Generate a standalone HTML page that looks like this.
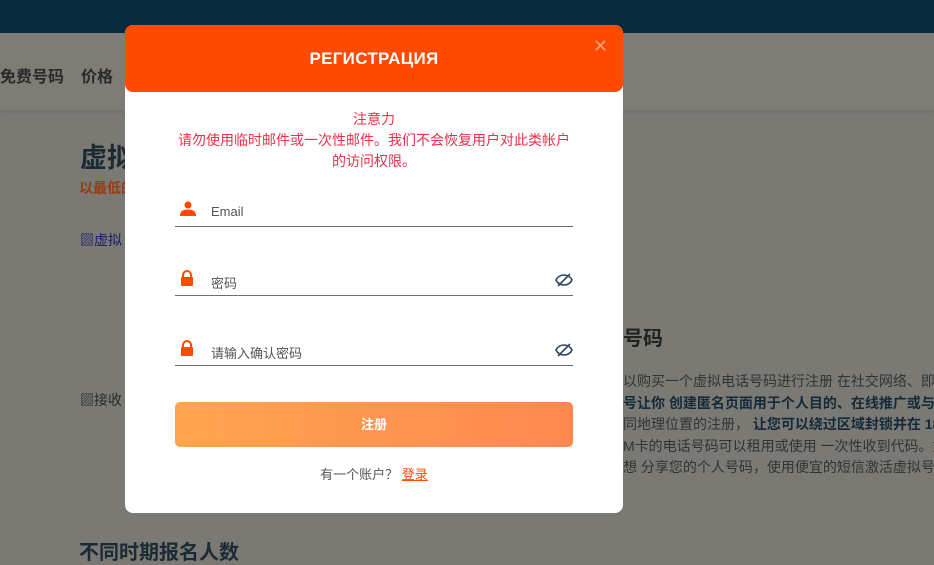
<!DOCTYPE html>
<html><head><meta charset="utf-8"><style>
*{margin:0;padding:0;box-sizing:border-box}
body{width:934px;height:558px;overflow:hidden;background:#7a7974;font-family:"Liberation Sans","Noto Sans CJK SC",sans-serif;position:relative}
.top{position:absolute;left:0;top:0;width:934px;height:33px;background:#0a2b3d}
.nav{position:absolute;left:0;top:33px;width:934px;height:77px;background:#7f7c76;box-shadow:0 2px 4px rgba(0,0,0,.08)}
.nav span{position:absolute;top:30px;font-size:16px;font-weight:bold;color:#2a2a2a}
.t{position:absolute;color:#1c2a36;font-weight:bold}
.modal{position:absolute;left:125px;top:25px;width:498px;height:488px;background:#fff;border-radius:8px;overflow:hidden}
.hd{height:67px;background:#ff4a00;border-radius:8px;color:#fff;font-weight:bold;font-size:17px;text-align:center;line-height:67px;letter-spacing:.3px}
.x{position:absolute;right:15px;top:11px;color:#f8a07a;font-size:18px;font-family:"DejaVu Sans",sans-serif}
.warn{position:absolute;left:0;width:498px;top:84px;text-align:center;color:#ee2f4a;font-size:14px;line-height:21px}
.f{position:absolute;left:50px;width:398px;border-bottom:1px solid #6e6d66;height:30px}
.f .ic{position:absolute;left:5px;top:4px}
.f .lb{position:absolute;left:36px;top:7px;font-size:13px;color:#555}
.f .eye{position:absolute;right:0;top:6px}
.btn{position:absolute;left:50px;top:377px;width:398px;height:45px;border-radius:5px;background:linear-gradient(90deg,#ffa44e,#ff8850);color:#fff;font-weight:bold;font-size:13px;text-align:center;line-height:45px}
.lg{position:absolute;top:439px;width:498px;text-align:center;font-size:13px;color:#555}
.lg a{color:#ff4a00;text-decoration:underline}
</style></head><body>
<div class="top"></div>
<div class="nav"><span style="left:0">免费号码</span><span style="left:81px">价格</span></div>
<div class="t" style="left:80px;top:136px;font-size:27px">虚拟</div>
<div class="t" style="left:79px;top:178px;font-size:14px;color:#9a3a10">以最低的</div>
<div style="position:absolute;left:80px;top:230px;font-size:14px;color:#1a1a6a">▨虚拟</div>
<div style="position:absolute;left:80px;top:390px;font-size:14px;color:#2a2a2a">▨接收</div>
<div class="t" style="left:79px;top:536px;font-size:20px">不同时期报名人数</div>
<div class="t" style="left:623px;top:322px;font-size:20px;color:#222">号码</div>
<div style="position:absolute;left:623px;top:371px;font-size:14px;line-height:21.5px;color:#333;white-space:nowrap">以购买一个虚拟电话号码进行注册 在社交网络、即<br><b style="color:#142a3a">号让你 创建匿名页面用于个人目的、在线推广或与</b><br>同地理位置的注册， <b style="color:#142a3a">让您可以绕过区域封锁并在 18</b><br>M卡的电话号码可以租用或使用 一次性收到代码。如<br>想 分享您的个人号码，使用便宜的短信激活虚拟号</div>
<div class="modal">
<div class="hd">РЕГИСТРАЦИЯ</div>
<div class="x">✕</div>
<div class="warn">注意力<br>请勿使用临时邮件或一次性邮件。我们不会恢复用户对此类帐户<br>的访问权限。</div>
<div class="f" style="top:172px"><svg class="ic" width="16" height="16" viewBox="0 0 16 16"><circle cx="8" cy="4" r="3.5" fill="#ff4a00"/><path d="M0 15c0-5 3-6.5 8-6.5s8 1.5 8 6.5z" fill="#ff4a00"/></svg><span class="lb">Email</span></div>
<div class="f" style="top:241px"><svg class="ic" width="14" height="16" viewBox="0 0 14 16"><path d="M3 7V5a4 4 0 0 1 8 0v2" stroke="#ff4a00" stroke-width="2" fill="none"/><rect x="1" y="7" width="12" height="9" rx="1" fill="#ff4a00"/></svg><span class="lb">密码</span><svg class="eye" width="18" height="16" viewBox="0 0 18 16"><path d="M1 8c2-4 5-5 8-5s6 1 8 5c-2 4-5 5-8 5s-6-1-8-5z" stroke="#2d4660" stroke-width="1.6" fill="none"/><path d="M3 14L15 2" stroke="#2d4660" stroke-width="1.6"/></svg></div>
<div class="f" style="top:311px"><svg class="ic" width="14" height="16" viewBox="0 0 14 16"><path d="M3 7V5a4 4 0 0 1 8 0v2" stroke="#ff4a00" stroke-width="2" fill="none"/><rect x="1" y="7" width="12" height="9" rx="1" fill="#ff4a00"/></svg><span class="lb">请输入确认密码</span><svg class="eye" width="18" height="16" viewBox="0 0 18 16"><path d="M1 8c2-4 5-5 8-5s6 1 8 5c-2 4-5 5-8 5s-6-1-8-5z" stroke="#2d4660" stroke-width="1.6" fill="none"/><path d="M3 14L15 2" stroke="#2d4660" stroke-width="1.6"/></svg></div>
<div class="btn">注册</div>
<div class="lg">有一个账户？ <a>登录</a></div>
</div>
</body></html>
